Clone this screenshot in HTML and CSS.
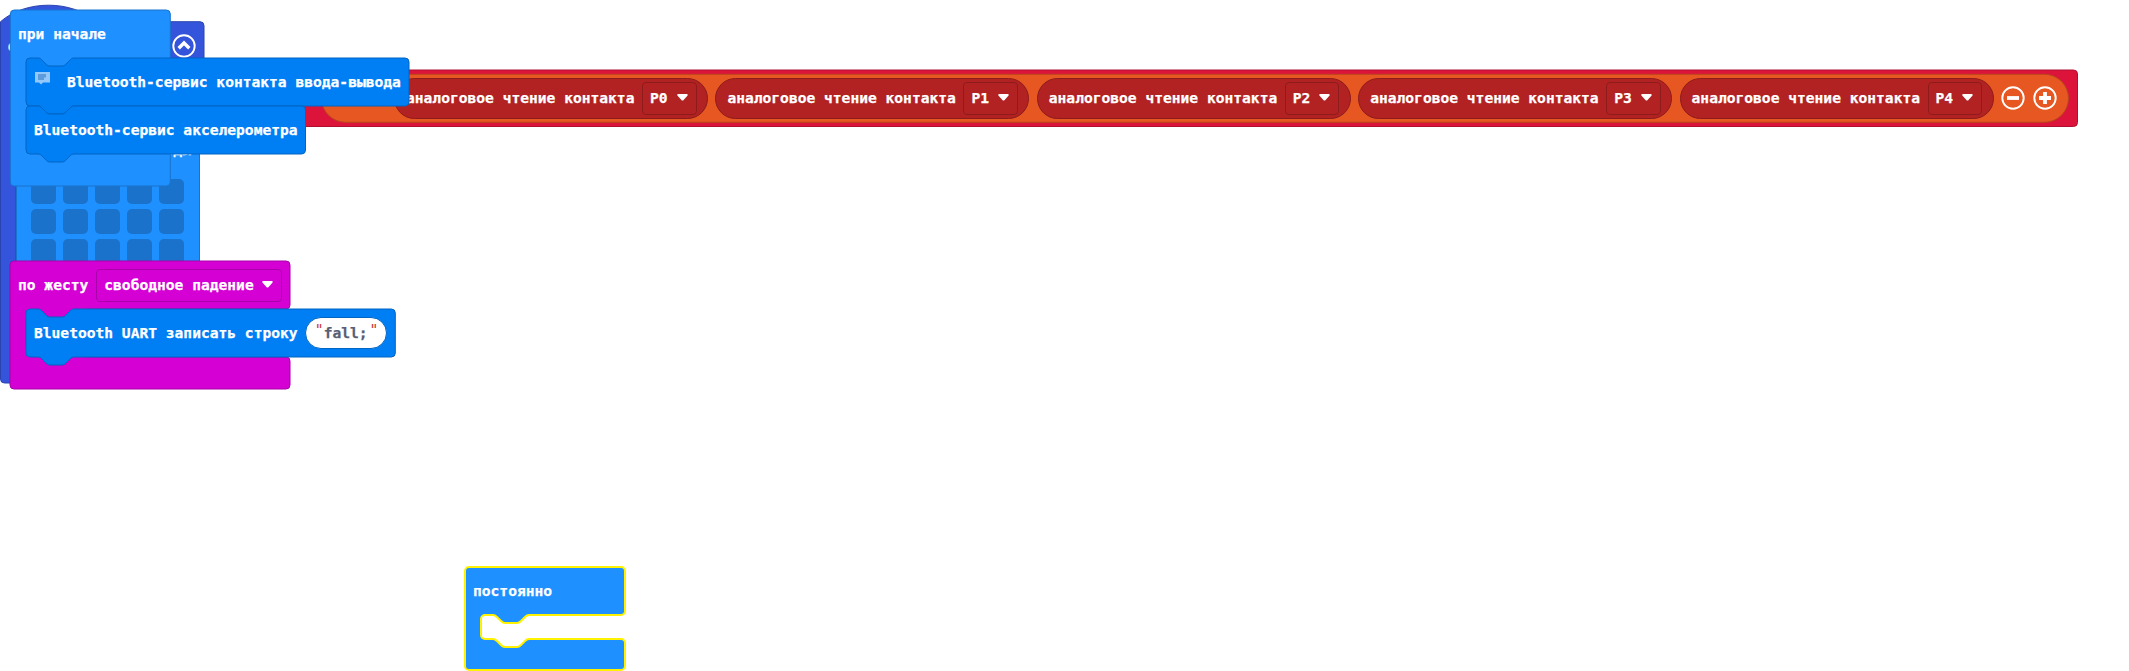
FILE: index.html
```
<!DOCTYPE html>
<html lang="ru">
<head>
<meta charset="utf-8">
<title>Блоки</title>
<link rel="stylesheet" href="styles.css">
</head>
<body>
<svg class="defs" width="0" height="0">
  <defs>
    <path id="arrow" d="M1.3 0H9.7C10.8 0 11 1 10.4 1.700L6.600 6C6 6.700 5 6.700 4.400 6L.6 1.700C0 1 .2 0 1.300 0Z"/>
  </defs>
</svg>
<main class="workspace">
  <section class="block event">
    <svg class="shape" width="206" height="385" viewBox="0 0 206 385">
      <path fill="#3455db" stroke="#2a44af" d="M.5 21.700c25-22 71-22 96 0H200a4 4 0 0 1 4 4V69.500H16V359H200V383H4.500a4 4 0 0 1-4-4Z"/>
    </svg>
    <div class="row">функция</div>
    <svg class="collapse" width="24" height="24" viewBox="0 0 24 24" fill="none" stroke="#fff"><circle cx="12" cy="12" r="10.700" stroke-width="1.900"/><path d="M6.700 14.200 12 9l5.300 5.200" stroke-width="3.400"/></svg>
  </section>

  <section class="block plot">
    <svg class="shape" width="2064" height="60" viewBox="0 0 2064 60">
      <rect x=".5" y="0" width="2061" height="56.500" rx="4" fill="#dc143c" stroke="#b01030"/>
      <rect x="305.500" y="4.300" width="1747" height="48" rx="24" fill="#e65722" stroke="#b8461b"/>
    </svg>
    <div class="join">
      <div class="pin">аналоговое чтение контакта<span class="field">P0<svg width="11" height="7"><use href="#arrow"/></svg></span></div>
      <div class="pin">аналоговое чтение контакта<span class="field">P1<svg width="11" height="7"><use href="#arrow"/></svg></span></div>
      <div class="pin">аналоговое чтение контакта<span class="field">P2<svg width="11" height="7"><use href="#arrow"/></svg></span></div>
      <div class="pin">аналоговое чтение контакта<span class="field">P3<svg width="11" height="7"><use href="#arrow"/></svg></span></div>
      <div class="pin">аналоговое чтение контакта<span class="field">P4<svg width="11" height="7"><use href="#arrow"/></svg></span></div>
      <div class="buttons">
        <svg width="24" height="24" viewBox="0 0 24 24" fill="none" stroke="#fff"><circle cx="12" cy="12" r="10.700" stroke-width="1.900"/><path d="M6 12H18" stroke-width="3.800"/></svg>
        <svg width="24" height="24" viewBox="0 0 24 24" fill="none" stroke="#fff"><circle cx="12" cy="12" r="10.700" stroke-width="1.900"/><path d="M6 12H18M12 6V18" stroke-width="3.800"/></svg>
      </div>
    </div>
  </section>

  <section class="block leds">
    <div class="row">показать светодиоды</div>
    <div class="grid"><i></i><i></i><i></i><i></i><i></i><i></i><i></i><i></i><i></i><i></i><i></i><i></i><i></i><i></i><i></i></div>
  </section>

  <section class="block start">
    <svg class="shape" width="162" height="178" viewBox="0 0 162 178"><rect x=".3" y="0" width="160" height="176" rx="4" fill="#1e90ff" stroke="#1873cc"/></svg>
    <div class="row">при начале</div>
    <div class="stack">
      <div class="statement">
        <svg class="shape" width="386" height="58" viewBox="0 0 386 58"><path class="bt" d="M0 4A4 4 0 0 1 4 0H12c2 0 3 1 4 2l4 4c1 1 2 2 4 2h12c2 0 3-1 4-2l4-4c1-1 2-2 4-2H379a4 4 0 0 1 4 4V44a4 4 0 0 1-4 4H48c-2 0-3 1-4 2l-4 4c-1 1-2 2-4 2H24c-2 0-3-1-4-2l-4-4c-1-1-2-2-4-2H4a4 4 0 0 1-4-4Z"/></svg>
        <svg class="comment" width="15" height="13" viewBox="0 0 15 13"><path fill="#94c8fb" d="M0 0H15V10.500H8L6 12.500 4 10.500H0Z"/><path fill="#5c9bdc" d="M3 2H11V5.500H9V8H3Z"/></svg>
        <div class="row">Bluetooth-сервис контакта ввода-вывода</div>
      </div>
      <div class="statement">
        <svg class="shape" width="284" height="58" viewBox="0 0 284 58"><path class="bt" d="M0 4A4 4 0 0 1 4 0H12c2 0 3 1 4 2l4 4c1 1 2 2 4 2h12c2 0 3-1 4-2l4-4c1-1 2-2 4-2H275.500a4 4 0 0 1 4 4V44a4 4 0 0 1-4 4H48c-2 0-3 1-4 2l-4 4c-1 1-2 2-4 2H24c-2 0-3-1-4-2l-4-4c-1-1-2-2-4-2H4a4 4 0 0 1-4-4Z"/></svg>
        <div class="row">Bluetooth-сервис акселерометра</div>
      </div>
    </div>
  </section>

  <section class="block gesture">
    <svg class="shape" width="282" height="130" viewBox="0 0 282 130"><path fill="#d400d4" stroke="#aa00aa" d="M0 4A4 4 0 0 1 4 0H276a4 4 0 0 1 4 4V44a4 4 0 0 1-4 4H16V96H276a4 4 0 0 1 4 4V124a4 4 0 0 1-4 4H4a4 4 0 0 1-4-4Z"/></svg>
    <div class="row">по жесту<span class="field">свободное падение<svg width="11" height="7"><use href="#arrow"/></svg></span></div>
    <div class="stack">
      <div class="statement">
        <svg class="shape" width="374" height="58" viewBox="0 0 374 58"><path fill="#d400d4" d="M-1-1H60V10H-1ZM-1 38H60V57H-1Z"/><path class="bt" d="M0 4A4 4 0 0 1 4 0H12c2 0 3 1 4 2l4 4c1 1 2 2 4 2h12c2 0 3-1 4-2l4-4c1-1 2-2 4-2H365.300a4 4 0 0 1 4 4V44a4 4 0 0 1-4 4H48c-2 0-3 1-4 2l-4 4c-1 1-2 2-4 2H24c-2 0-3-1-4-2l-4-4c-1-1-2-2-4-2H4a4 4 0 0 1-4-4Z"/></svg>
        <div class="row">Bluetooth UART записать строку<span class="string"><q>"</q>fall;<q>"</q></span></div>
      </div>
    </div>
  </section>

  <section class="block forever">
    <svg class="shape" width="164" height="107" viewBox="0 0 164 107"><path fill="#1e90ff" stroke="#fff200" stroke-width="2" d="M0 4A4 4 0 0 1 4 0H156a4 4 0 0 1 4 4V44a4 4 0 0 1-4 4H64c-2 0-3 1-4 2l-4 4c-1 1-2 2-4 2H40c-2 0-3-1-4-2l-4-4c-1-1-2-2-4-2H20a4 4 0 0 0-4 4V68a4 4 0 0 0 4 4H28c2 0 3 1 4 2l4 4c1 1 2 2 4 2h12c2 0 3-1 4-2l4-4c1-1 2-2 4-2H156a4 4 0 0 1 4 4V99a4 4 0 0 1-4 4H4a4 4 0 0 1-4-4Z"/></svg>
    <div class="row">постоянно</div>
  </section>
</main>
</body>
</html>
```
FILE: styles.css
```
body { margin: 0; background: #fff; overflow: hidden; }
.defs { position: absolute; }
.workspace {
  position: relative; width: 2129px; height: 671px; overflow: hidden;
  font: bold 14.600px/16px "DejaVu Sans Mono", monospace; color: #fff; white-space: nowrap;
  -webkit-text-stroke: 0.25px currentColor;
}
/* Blocks sit freely on the canvas */
.block { position: absolute; }
.shape { position: absolute; left: 0; top: 0; overflow: visible; }
.row { position: relative; display: flex; align-items: center; height: 48px; padding-left: 8px; box-sizing: border-box; }
.event { left: 0; top: 0; width: 206px; padding-top: 22px; }
.collapse { position: absolute; left: 172px; top: 33.500px; }
.plot { left: 16px; top: 69.500px; width: 2064px; height: 58px; }
.join { position: relative; display: flex; align-items: center; gap: 7.400px; height: 57px; padding-left: 378px; }
.pin {
  display: flex; flex: none; align-items: center; justify-content: space-between;
  box-sizing: border-box; width: 314px; height: 41px; padding: 0 11.500px 0 11px;
  border: 1px solid #8e1b1b; border-radius: 21px; background: #b22222;
}
.field {
  display: flex; align-items: center; justify-content: space-between; box-sizing: border-box;
  width: 54.500px; height: 33px; padding: 0 8px 0 7px; border: 1px solid #8e1b1b; border-radius: 4px;
}
.field svg { fill: #fff; position: relative; top: -1px; }
.pin .field { margin-right: -1px; }
.buttons { display: flex; gap: 8px; }
.leds {
  left: 16px; top: 126.500px; width: 183.500px; height: 150px; box-sizing: border-box;
  background: #1e90ff; border: 1px solid #1873cc;
}
.leds .row { padding: 0 0 3px 7px; }
.grid { display: grid; grid-template-columns: repeat(5, 25px); grid-auto-rows: 25px; gap: 5px 7px; padding: 3.500px 0 0 14px; }
.grid i { background: #1a72cb; border-radius: 5px; }
.start { left: 10px; top: 10px; }
.stack { margin-left: 16px; }
.statement { position: relative; height: 48px; }
.bt { fill: #007ef4; stroke: #0065c3; }
.statement .comment { position: absolute; z-index: 1; left: 9px; top: 14px; }
.comment + .row { padding-left: 41px; }
.gesture { left: 10px; top: 261px; }
.gesture .field { width: 186px; margin-left: 8px; border-color: #a0a; }
.string {
  display: flex; align-items: center; justify-content: center; box-sizing: border-box;
  width: 82px; height: 32px; margin-left: 7px; border: 1px solid #0065c3; border-radius: 16px;
  background: #fff; color: #575e75;
}
.string q { quotes: none; font-weight: normal; color: #c33; position: relative; top: -4px; -webkit-text-stroke: 0; }
.string q:last-child { left: 2px; }
.string q::before, .string q::after { content: none; }
.forever { left: 465px; top: 567px; }
```
